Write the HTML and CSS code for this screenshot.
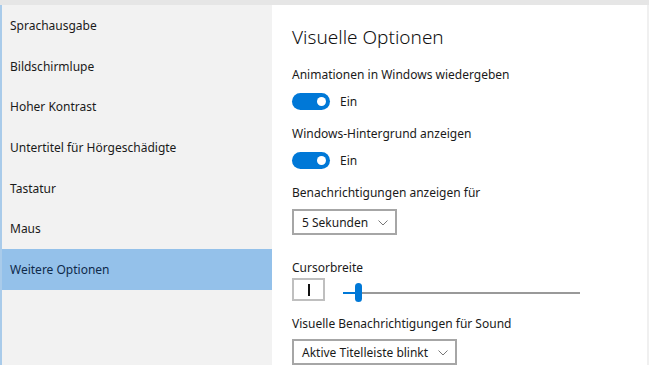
FILE: index.html
```html
<!DOCTYPE html>
<html lang="de">
<head>
    <meta charset="UTF-8">
    <meta name="viewport" content="width=device-width, initial-scale=1.0">
    <title>Erleichterte Bedienung</title>
    <link rel="stylesheet" href="styles.css">
</head>
<body>
    <div class="topbar"></div>
    <div class="main">
        <nav class="sidebar">
            <a href="#">Sprachausgabe</a>
            <a href="#">Bildschirmlupe</a>
            <a href="#">Hoher Kontrast</a>
            <a href="#">Untertitel für Hörgeschädigte</a>
            <a href="#">Tastatur</a>
            <a href="#">Maus</a>
            <a href="#" class="active">Weitere Optionen</a>
        </nav>

        <section class="content">
            <h1>Visuelle Optionen</h1>

            <div class="label first">Animationen in Windows wiedergeben</div>
            <div class="toggle-row">
                <span class="toggle"><span class="knob"></span></span>
                <span>Ein</span>
            </div>

            <div class="label">Windows-Hintergrund anzeigen</div>
            <div class="toggle-row">
                <span class="toggle"><span class="knob"></span></span>
                <span>Ein</span>
            </div>

            <div class="label">Benachrichtigungen anzeigen für</div>
            <div class="select">
                <span>5 Sekunden</span>
                <svg class="chevron" width="10" height="6" viewBox="0 0 10 6"><path d="M0.5 0.5 L5 5 L9.5 0.5" fill="none" stroke="#777" stroke-width="1"/></svg>
            </div>

            <div class="label wide">Cursorbreite</div>
            <div class="cursor-row">
                <div class="cursor-box"><span class="caret"></span></div>
                <div class="slider">
                    <div class="fill"></div>
                    <div class="thumb"></div>
                </div>
            </div>

            <div class="label">Visuelle Benachrichtigungen für Sound</div>
            <div class="select sound">
                <span>Aktive Titelleiste blinkt</span>
                <svg class="chevron" width="10" height="6" viewBox="0 0 10 6"><path d="M0.5 0.5 L5 5 L9.5 0.5" fill="none" stroke="#777" stroke-width="1"/></svg>
            </div>
        </section>
    </div>
</body>
</html>
```

FILE: styles.css
```css
html, body {
    height: 100%;
    margin: 0;
    overflow: hidden;
}
body {
    background-color: #ffffff;
    color: #1a1a1a;
    font-family: 'Noto Sans', 'Open Sans', sans-serif;
    font-size: 12px;
    display: flex;
    flex-direction: column;
}
.topbar {
    height: 5px;
    background-color: #e6e6e6;
    flex-shrink: 0;
}
.main {
    flex: 1;
    display: flex;
    border-right: 2px solid #f0f0f0;
}
.sidebar {
    width: 270px;
    background-color: #f2f2f2;
    border-left: 2px solid #a9cbea;
    display: flex;
    flex-direction: column;
}
.sidebar a {
    height: 40.7px;
    line-height: 42px;
    padding-left: 8px;
    color: #1a1a1a;
    text-decoration: none;
    white-space: nowrap;
}
.sidebar a.active {
    background-color: #94c1ea;
    color: #0f2a4a;
}
.content {
    flex: 1;
    padding: 19px 0 0 20px;
}
h1 {
    font-size: 19px;
    font-weight: 300;
    line-height: 26px;
    margin: 0;
    color: #111;
}
.label {
    line-height: 18px;
    margin-top: 14px;
}
.label.first {
    margin-top: 16px;
}
.label.wide {
    margin-top: 24px;
}
.toggle-row {
    display: flex;
    align-items: center;
    gap: 10px;
    height: 20px;
    margin-top: 7px;
}
.toggle {
    width: 38px;
    height: 17px;
    border-radius: 9px;
    background-color: #0078d7;
    display: flex;
    align-items: center;
    justify-content: flex-end;
    padding-right: 4px;
    box-sizing: border-box;
}
.knob {
    width: 9px;
    height: 9px;
    border-radius: 50%;
    background-color: #fff;
}
.select {
    display: flex;
    width: max-content;
    align-items: center;
    gap: 10px;
    height: 26px;
    box-sizing: border-box;
    border: 2px solid #a6a6a6;
    padding: 0 7px 0 8px;
    margin-top: 7px;
}
.select.sound {
    margin-top: 6px;
}
.chevron {
    margin-top: 1px;
}
.cursor-row {
    display: flex;
    align-items: center;
    margin-top: 1px;
    height: 23px;
}
.cursor-box {
    width: 33px;
    height: 23px;
    box-sizing: border-box;
    border: 2px solid #bfbfbf;
    display: flex;
    align-items: center;
    justify-content: center;
}
.caret {
    width: 2px;
    height: 12px;
    background-color: #111;
}
.slider {
    position: relative;
    margin-left: 18px;
    margin-top: 6px;
    width: 237px;
    height: 2px;
    background-color: #999;
}
.fill {
    width: 14px;
    height: 2px;
    background-color: #0078d7;
}
.thumb {
    position: absolute;
    left: 12px;
    top: -9px;
    width: 7px;
    height: 19px;
    border-radius: 4px;
    background-color: #0078d7;
}
```
